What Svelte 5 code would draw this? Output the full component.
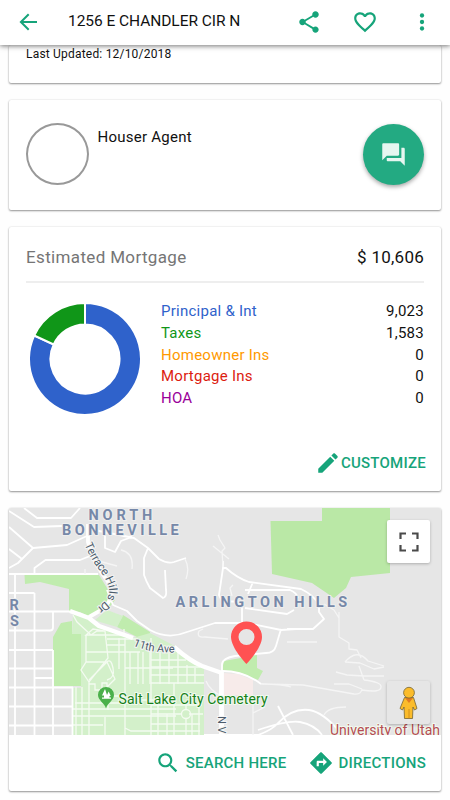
<script>
	const address = '1256 E CHANDLER CIR N';
	const total = '10,606';

	const costs = [
		{ label: 'Principal & Int', value: '9,023', share: 0.819, color: '#2f62cb' },
		{ label: 'Taxes', value: '1,583', share: 0.181, color: '#109618' },
		{ label: 'Homeowner Ins', value: '0', share: 0, color: '#ff9900' },
		{ label: 'Mortgage Ins', value: '0', share: 0, color: '#dc1c10' },
		{ label: 'HOA', value: '0', share: 0, color: '#990099' }
	];

	const point = (radius, part) => {
		const angle = part * 2 * Math.PI;
		return `${56 + radius * Math.sin(angle)} ${56 - radius * Math.cos(angle)}`;
	};

	const getSlice = (from, to) => {
		const large = to - from > 0.5 ? 1 : 0;
		return `M${point(56, from)}A56 56 0 ${large} 1 ${point(56, to)}L${point(34.5, to)}A34.5 34.5 0 ${large} 0 ${point(34.5, from)}Z`;
	};

	let start = 0;
	const slices = costs
		.filter((cost) => cost.share > 0)
		.map((cost) => {
			const from = start;
			start += cost.share;
			return { path: getSlice(from, start), color: cost.color };
		});
</script>

<div class="screen">
	<header>
		<button class="back" aria-label="Back">
			<svg width="24" height="24" viewBox="0 0 24 24">
				<path d="M21 12H5.500M12.700 4.200L4.900 12l7.800 7.800" fill="none" stroke="currentColor" stroke-width="2" />
			</svg>
		</button>
		<h1>{address}</h1>
		<button class="share" aria-label="Share">
			<svg width="26" height="26" viewBox="0 0 24 24">
				<path fill="currentColor" d="M18 16.08c-.76 0-1.44.3-1.96.77L8.91 12.7c.05-.23.09-.46.09-.7s-.04-.47-.09-.7l7.05-4.11c.54.5 1.25.81 2.04.81 1.66 0 3-1.34 3-3s-1.34-3-3-3-3 1.34-3 3c0 .24.04.47.09.7L8.04 9.81C7.5 9.31 6.79 9 6 9c-1.66 0-3 1.34-3 3s1.34 3 3 3c.79 0 1.5-.31 2.04-.81l7.12 4.16c-.05.21-.08.43-.08.65 0 1.61 1.31 2.92 2.92 2.92s2.92-1.31 2.92-2.92-1.31-2.92-2.92-2.92z" />
			</svg>
		</button>
		<button class="like" aria-label="Favorite">
			<svg width="26" height="26" viewBox="0 0 24 24">
				<path fill="currentColor" d="M16.5 3c-1.74 0-3.41.81-4.5 2.09C10.91 3.81 9.24 3 7.5 3 4.42 3 2 5.42 2 8.5c0 3.78 3.4 6.86 8.55 11.54L12 21.35l1.45-1.32C18.6 15.36 22 12.28 22 8.5 22 5.42 19.58 3 16.5 3zm-4.4 15.55l-.1.1-.1-.1C7.14 14.24 4 11.39 4 8.5 4 6.5 5.5 5 7.5 5c1.54 0 3.04.99 3.57 2.36h1.87C13.46 5.99 14.96 5 16.5 5c2 0 3.5 1.5 3.5 3.5 0 2.89-3.14 5.74-7.9 10.05z" />
			</svg>
		</button>
		<button class="more" aria-label="More">
			<svg width="26" height="26" viewBox="0 0 24 24" fill="currentColor">
				<circle cx="12" cy="6" r="2" />
				<circle cx="12" cy="12" r="2" />
				<circle cx="12" cy="18" r="2" />
			</svg>
		</button>
	</header>

	<main>
		<section class="card updated">Last Updated: 12/10/2018</section>

		<section class="card agent">
			<div class="avatar"></div>
			<div class="agent-name">Houser Agent</div>
			<button class="chat" aria-label="Chat">
				<svg width="27" height="27" viewBox="0 0 24 24">
					<path fill="currentColor" d="M21 6h-2v9H6v2c0 .55.45 1 1 1h11l4 4V7c0-.55-.45-1-1-1zm-4 6V3c0-.55-.45-1-1-1H3c-.55 0-1 .45-1 1v14l4-4h10c.55 0 1-.45 1-1z" />
				</svg>
			</button>
		</section>

		<section class="card mortgage">
			<div class="mortgage-head">
				<h2>Estimated Mortgage</h2>
				<span>$ {total}</span>
			</div>
			<div class="mortgage-body">
				<svg width="112" height="112" viewBox="0 0 112 112">
					{#each slices as slice}
						<path d={slice.path} fill={slice.color} stroke="#fff" stroke-width="2" />
					{/each}
				</svg>
				<ul>
					{#each costs as cost}
						<li>
							<span style="color: {cost.color}">{cost.label}</span>
							<span>{cost.value}</span>
						</li>
					{/each}
				</ul>
			</div>
			<button class="action customize">
				<svg width="26" height="26" viewBox="0 0 24 24">
					<path fill="currentColor" d="M3 17.25V21h3.75L17.81 9.94l-3.75-3.75L3 17.25zM20.71 7.04c.39-.39.39-1.02 0-1.41l-2.34-2.34c-.39-.39-1.02-.39-1.41 0l-1.83 1.83 3.75 3.75 1.83-1.83z" />
				</svg>
				CUSTOMIZE
			</button>
		</section>

		<section class="card place">
			<div class="map">
				<svg class="tiles" width="432" height="227" viewBox="9 508 432 227">
					<rect x="9" y="508" width="432" height="228" fill="#e6e6e6" />

					<!-- parks -->
					<g fill="#c0ecae">
						<path d="M24.5 575H99l8 13 8 12-7 9-18 8-10-5-11-1v-22l-29-7-15 2z" />
						<path d="M53 637l8-14 11-2v11h9v54H54l-1-36z" />
						<path d="M117 627l6-12 27 17v4l-13 1z" />
						<path d="M224 661l33-6v13l6 3-5 9-14-6-22-4z" />
					</g>
					<path fill="#bae8a6" d="M270.5 521H322v-13h68v65l-39 4-5 11-12 10-22-15-40-9z" />
					<g fill="#d3f0ca">
						<path d="M73 614l15 4 12 9 33 11 17-5 23 12 31 22v69H73v-48h8v-54h-9z" />
						<path d="M95 620l12-10 16 6-6 11-17-5z" />
					</g>
					<path fill="#f7ebea" d="M224 673l14 1 15 6v15h-29z" />

					<!-- cemetery lanes -->
					<g fill="none" stroke="#f4fbf1" stroke-width="1.3">
						<path d="M73 615l4 7 14 13 6-4h8M86 635v27l-5 8 8 12 19-24-3-27-12-2-7 6h38v-6M86 652h54M86 662h21M107 639h31M107 645h18M119 638v31M125 638v97M130 652v32M138 652v32M143 652v32M150 652v32M125 668h48M89 680l19-19M89 681v54M107 662l8 17-7 7v24M107 662q4-4 6 6t-6 12M89 684h6v6h7v-7h5v13h16l3 4h47M76 687v48M82 687v48M75 703h66M73 709h103M73 716h103M73 725h30M105 717v18M125 728l6 3h26" />
						<path d="M151 638v97M160 652v32M169 652v32M178 652v32M187 665v18M195 668v15M151 660h35M151 667h49M151 675h53M151 683h53M158 700v35M167 714v21M174 683v52M189 714h14M192 714v21M199 700v35M151 705h51M151 714h30M151 724h49M151 731h49" />
						<circle cx="186" cy="714" r="4.5" />
						<path d="M186 704v5M186 719v16" />
					</g>

					<!-- streets -->
					<g fill="none" stroke="#fff" stroke-width="1.8" stroke-linejoin="round">
						<path d="M24 508l13 10h34l9-10M9 511l25 16 28-1M9 527l24 21 34-3 20-9M9 549l13 10M33 548l-15 15-9 5M34.5 574v-6l11-8H80l10-4M9 574h89M9 593h25.500M9 611.500h61M9 630.500h41q3 0 3-3v-16M9 650h44M9 668.500h44M34 678h19M9 687.500h64M9 706.500h63M9 725.500h63" />
						<path d="M15 574v161M34.500 593v142M53 650v85M72.500 687v48" />
						<path d="M105 536v12l10 4 6-11 8-3 5-5M94 530l40 8 14 10 11 11q8 5 15 3l12-4M148 548l-4 10v17q2 6 6 13l13 10q4-1 3-8l-1-20M107 590l6 15 14 6 10 10 13 9q18 10 37 2l28-9h32l34 7 15-1M223 561v7h3q11 10 23 14l52 7q11 5 18 15v8l5 7-11 10h-26M223 568l-4 27 3 6 20 1v20M248 594l5-12M245 590h45q7 3 8 8M245 608l42 6 7-4M222 674v-10q1-6 13-8l31-3q8 0 10-7l5-17" />
						<path d="M222 671q22 0 39 13M204 735h54q14-5 20-12 14-15 31-13 14 2 31 22M258 730q30-10 42-8 15 3 22 13M278 706l15 29" />
					</g>
					<g fill="none" stroke="#f5f5f5" stroke-width="1.3" stroke-linejoin="round">
						<path d="M121 550q13 3 11 19M95 560l22 6M85 574v-5M223 567l-1-16 3-3-5-8-2-5M213 546l16 13M185 559q5 9 1 20M203 629l-4 2q-3 7 6 6l23 2M232 596l-2-8 3-3M287 642h30M261 684l42 1 51 9q7 1 8-5M261 684q22 0 30 3M345 662l15 1 14 6 10-2M345 662q12-14 23-1l16 5M336 672l11 3 17 1 20 0M359 666l5 14M334 684h15l13 5M364 680q18 2 17 7 0 6-19 3M339 612v25l10 6v6l8 1 4 8M324 604l10 6 5 8M324 715q4-8 22-8M253 695v40M253 713l12-6M206 681q4 10 16 15" />
					</g>
					<g fill="none" stroke="#fff" stroke-linejoin="round">
						<path d="M88 524v18q4 19 21 41 8 12-6 26l-14 8" stroke-width="3.800" />
						<path d="M70 611l19 7 10 8 34 12M174 647q16 14 28 19l20 7" stroke-width="4.500" />
						<path d="M221.500 672v63" stroke-width="4.800" />
					</g>

					<defs>
						<path id="terrace" d="M84.500 544.500Q91 560 100 571Q107 580 109 589Q110 597 103 603L96 609" />
						<path id="eleventh" d="M133 645.500Q150 653.500 180 652.500" />
					</defs>
					<g class="road-name">
						<text class="terrace"><textPath href="#terrace" textLength="75">Terrace Hills Dr</textPath></text>
						<text><textPath href="#eleventh">11th Ave</textPath></text>
						<text transform="translate(218 716) rotate(90)">N V</text>
					</g>
					<g class="district">
						<text x="88.500" y="520" textLength="64">NORTH</text>
						<text x="62" y="535" textLength="117">BONNEVILLE</text>
						<text x="175.500" y="606.500" textLength="172">ARLINGTON HILLS</text>
						<text x="9.500" y="610">R</text>
						<text x="10" y="625.500">S</text>
					</g>

					<path fill="#4bb04b" d="M106 708.500c-1-5-8-8-8-13.500a8 8 0 0 1 16 0c0 5.500-7 8.500-8 13.500z" />
					<path fill="#fff" d="M105 689l-3 6.500h2v2h-2v1.200h9v-1.200h-1.500v-1.500h1.200l-2-4.500-1.700 3.500z" />
					<text class="cemetery" x="118.500" y="703.500" textLength="149">Salt Lake City Cemetery</text>
					<text class="university" x="330" y="735" textLength="110">University of Utah</text>

					<path fill="#ff5252" fill-rule="evenodd" d="M246.500 621.500a15.500 15.500 0 0 0-15.500 15.500c0 11 15.500 27 15.500 27s15.500-16 15.500-27A15.500 15.500 0 0 0 246.500 621.500zm0 7.500a8 8 0 1 1 0 16 8 8 0 0 1 0-16z" />
				</svg>
				<button class="fullscreen" aria-label="Toggle fullscreen view">
					<svg width="20" height="20" viewBox="0 0 20 20">
						<path d="M1.500 7V1.500H7M13 1.500h5.500V7M18.500 13v5.500H13M7 18.500H1.500V13" fill="none" stroke="#4a4a4a" stroke-width="2.200" />
					</svg>
				</button>
				<button class="pegman" aria-label="Street View">
					<svg width="20" height="34" viewBox="0 0 20 34">
						<path d="M5.500 11.500h9l3.500 11-2.500 1.500-1.500-3-.5 11.500h-8L5 21l-1.500 3L1 22.500z" fill="#fbbc2b" stroke="#756433" stroke-width=".8" />
						<path d="M6 12h8l-4 5z" fill="#e27b20" />
						<path d="M10 23v9.500" stroke="#c9851b" stroke-width=".8" />
						<circle cx="10" cy="6.700" r="5.400" fill="#fbbc2b" stroke="#756433" stroke-width=".8" />
					</svg>
				</button>
			</div>
			<div class="place-actions">
				<button class="action">
					<svg width="26" height="26" viewBox="0 0 24 24">
						<path fill="currentColor" d="M15.500 14h-.79l-.28-.27C15.410 12.590 16 11.110 16 9.500 16 5.910 13.090 3 9.500 3S3 5.910 3 9.500 5.910 16 9.500 16c1.610 0 3.090-.59 4.230-1.570l.27.28v.79l5 4.990L20.490 19l-4.990-5zm-6 0C7.010 14 5 11.990 5 9.500S7.010 5 9.500 5 14 7.010 14 9.500 11.990 14 9.500 14z" />
					</svg>
					SEARCH HERE
				</button>
				<button class="action">
					<svg width="26" height="26" viewBox="0 0 24 24">
						<path fill="currentColor" d="M21.710 11.290l-9-9c-.39-.39-1.020-.39-1.410 0l-9 9c-.39.39-.39 1.020 0 1.410l9 9c.39.39 1.020.39 1.410 0l9-9c.39-.38.39-1.010 0-1.410zM14 14.500V12h-4v3H8v-4c0-.55.45-1 1-1h5V7.500l3.500 3.500-3.500 3.500z" />
					</svg>
					DIRECTIONS
				</button>
			</div>
		</section>
	</main>
</div>

<style>
	:global(body) {
		background: #fefefe;
	}
	.screen {
		height: 800px;
		overflow: hidden;
		font-family: Roboto, sans-serif;
		font-size: 15px;
		letter-spacing: .25px;
		color: #111;
	}
	button {
		display: flex;
		align-items: center;
		justify-content: center;
		padding: 0;
		border: 0;
		background: none;
		color: #16a47a;
		font: inherit;
		letter-spacing: inherit;
	}
	svg {
		display: block;
		flex: none;
	}
	header {
		position: relative;
		z-index: 1;
		display: flex;
		align-items: center;
		box-sizing: border-box;
		height: 45px;
		padding: 0 15px 2px 16px;
		background: #fff;
		box-shadow: 0 1px 5px rgba(0, 0, 0, .55);
	}
	h1 {
		flex: 1;
		margin: 0 0 2px 28px;
		font-size: 15.500px;
		font-weight: 400;
		letter-spacing: -.05px;
	}
	.like {
		margin: 0 31px 0 30px;
	}
	main {
		display: flex;
		flex-direction: column;
		gap: 17px;
		padding: 0 9px;
	}
	.card {
		box-sizing: border-box;
		border-radius: 2px;
		background: #fff;
		box-shadow: 0 1px 2px rgba(0, 0, 0, .4), 0 0 2px rgba(0, 0, 0, .12);
	}
	.updated {
		height: 37.500px;
		padding: 1.500px 17px;
		font-size: 12px;
		line-height: 15px;
		letter-spacing: .2px;
	}
	.agent {
		display: flex;
		align-items: center;
		height: 110px;
		padding: 0 17px;
	}
	.avatar {
		box-sizing: border-box;
		width: 63px;
		height: 62px;
		margin-bottom: 2px;
		border: 2px solid #999;
		border-radius: 50%;
	}
	.agent-name {
		flex: 1;
		align-self: flex-start;
		margin: 28px 0 0 8.500px;
		line-height: 18px;
	}
	.chat {
		width: 61px;
		height: 61px;
		border-radius: 50%;
		background: #23aa82;
		color: #e6f6f0;
		box-shadow: 0 2px 4px rgba(0, 0, 0, .35);
	}
	.mortgage {
		height: 264.500px;
		padding: 0 17px;
	}
	.mortgage-head {
		display: flex;
		align-items: center;
		justify-content: space-between;
		box-sizing: border-box;
		height: 56px;
		padding-top: 7px;
		border-bottom: 2px solid #eee;
		font-size: 17px;
	}
	h2 {
		margin: 0;
		color: #757575;
		font-size: inherit;
		font-weight: 400;
		letter-spacing: .35px;
	}
	.mortgage-body {
		display: flex;
		gap: 20px;
		padding: 20px 0 0 3px;
	}
	ul {
		flex: 1;
		margin: -1.500px 0 0;
		padding: 0;
		list-style: none;
	}
	li {
		display: flex;
		justify-content: space-between;
		line-height: 21.750px;
	}
	.action {
		gap: 5px;
		font-weight: 500;
		letter-spacing: .25px;
	}
	.customize {
		gap: 0;
		margin: 35.500px -2px 0 auto;
	}
	.place {
		height: 283px;
		overflow: hidden;
	}
	.map {
		position: relative;
		height: 227px;
		overflow: hidden;
	}
	.district {
		fill: #7688a8;
		stroke: #eee;
		stroke-width: 2px;
		paint-order: stroke;
		font-size: 14.500px;
		font-weight: 700;
	}
	.road-name {
		fill: #4c5c6b;
		stroke: #f5f5f5;
		stroke-width: 2px;
		paint-order: stroke;
		font-size: 11px;
		letter-spacing: 0;
	}
	.terrace {
		font-size: 11.500px;
	}
	.cemetery,
	.university {
		fill: #168018;
		stroke: #f1faee;
		stroke-width: 2px;
		paint-order: stroke;
		font-size: 14px;
		letter-spacing: 0;
	}
	.university {
		fill: #b54c53;
	}
	.fullscreen,
	.pegman {
		position: absolute;
		right: 11px;
		width: 43px;
		height: 43px;
		border-radius: 2px;
		box-shadow: 0 1px 3px rgba(0, 0, 0, .25);
	}
	.fullscreen {
		top: 12px;
		background: #fff;
	}
	.pegman {
		bottom: 11px;
		background: #e6e6e6;
	}
	.place-actions {
		display: flex;
		align-items: center;
		justify-content: flex-end;
		gap: 21px;
		height: 56px;
		padding-right: 15px;
	}
</style>
